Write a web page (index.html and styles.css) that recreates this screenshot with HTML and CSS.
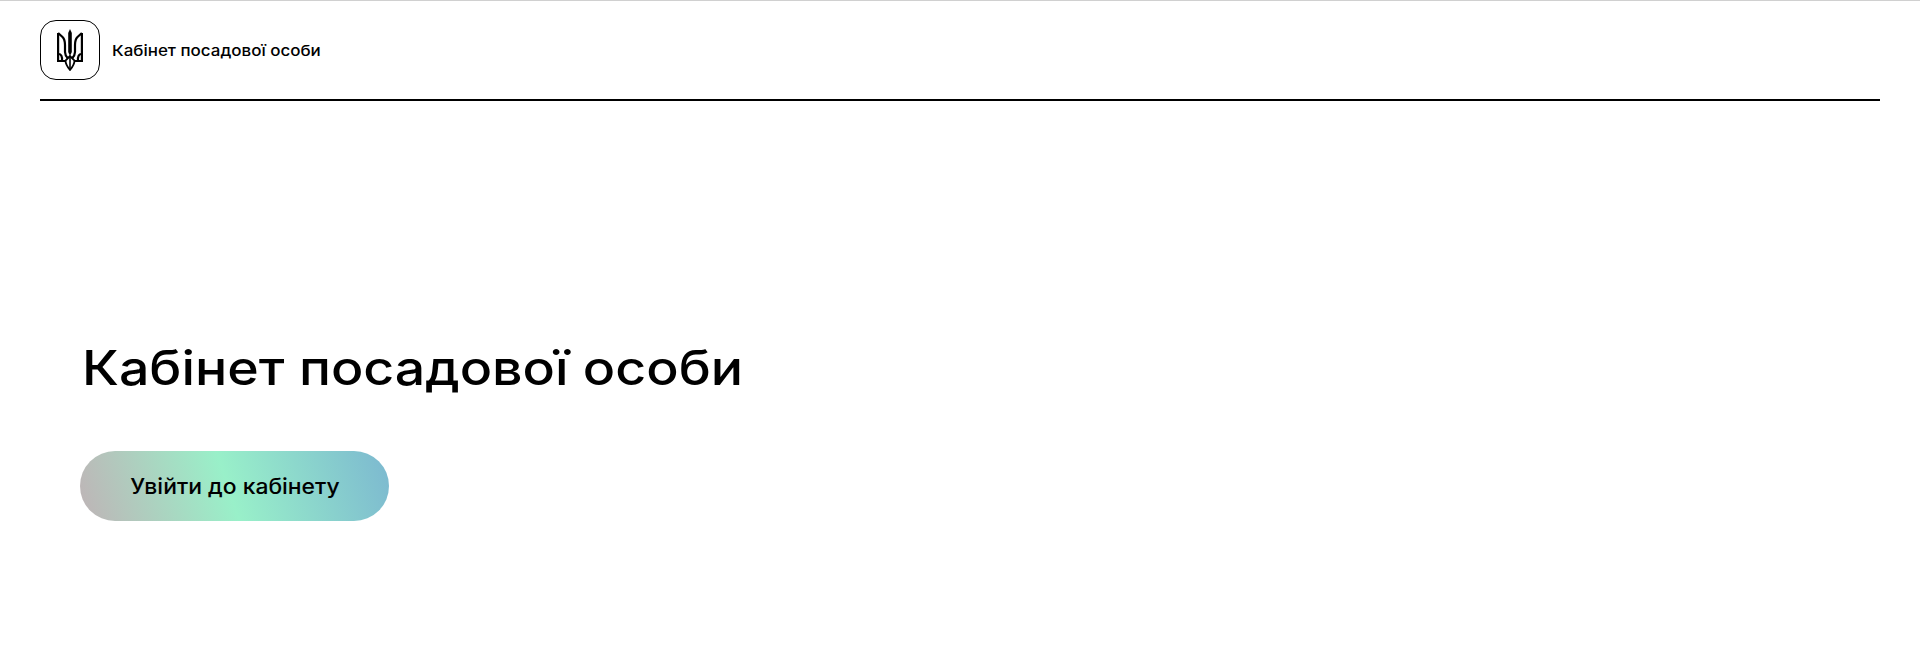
FILE: index.html
```html
<!DOCTYPE html>
<html lang="uk">
<head>
<meta charset="utf-8">
<title>Кабінет посадової особи</title>
<link rel="stylesheet" href="styles.css">
</head>
<body>
<header class="header">
  <div class="logo">
    <svg class="trident" viewBox="0 0 26 42" width="26" height="42" fill="none" stroke="#000" stroke-width="2.2" stroke-linejoin="miter">
      <path d="M13 0 L11.2 4 V23 L13 27 L14.8 23 V4 Z" fill="#000" stroke="none"/>
      <path d="M1.1 4 L5.5 8 C7.5 10 8 13 8 16 V23 C8 26 9.5 28 11 29.5"/>
      <path d="M24.9 4 L20.5 8 C18.5 10 18 13 18 16 V23 C18 26 16.5 28 15 29.5"/>
      <path d="M1.1 4 V32 H9"/>
      <path d="M24.9 4 V32 H17"/>
      <path d="M1.5 25 C4 25 5.5 27.5 5 32"/>
      <path d="M24.5 25 C22 25 20.5 27.5 21 32"/>
      <path d="M13 27 L8.5 31.5 C8.5 35.5 10.5 38 13 41 C15.5 38 17.5 35.5 17.5 31.5 Z" stroke-width="1.8"/>
      <path d="M13 28 V40" stroke-width="1.6"/>
    </svg>
  </div>
  <span class="brand">Кабінет посадової особи</span>
</header>
<main class="hero">
  <h1 class="title">Кабінет посадової особи</h1>
  <a class="cta" href="#"><span class="cta-label">Увійти до кабінету</span></a>
</main>
</body>
</html>
```

FILE: styles.css
```css
html, body {
  margin: 0;
  padding: 0;
  background: #fff;
  color: #000;
  font-family: Inter, "Noto Sans", sans-serif;
}
body {
  height: 657px;
  overflow: hidden;
  border-top: 1px solid #d0d0d0;
  box-sizing: border-box;
}
.header {
  display: flex;
  align-items: center;
  gap: 12px;
  margin: 0 40px;
  padding: 19px 0 19px;
  border-bottom: 2px solid #000;
}
.logo {
  width: 58px;
  height: 58px;
  border: 1px solid #000;
  border-radius: 16px;
  display: flex;
  align-items: center;
  justify-content: center;
}
.brand {
  display: inline-block;
  font-size: 15px;
  font-weight: 500;
  transform: scaleX(1.13);
  transform-origin: left center;
}
.hero {
  padding: 238px 80px 0;
}
.title {
  margin: 0 0 54px 2px;
  font-size: 48px;
  line-height: 58px;
  font-weight: 500;
  width: max-content;
  transform: scaleX(1.118);
  transform-origin: left center;
}
.cta {
  display: flex;
  align-items: center;
  justify-content: center;
  width: 309px;
  height: 70px;
  border-radius: 35px;
  background: linear-gradient(72deg, #bfb3b6 0%, #99f0c9 48%, #7cb8d0 100%);
  color: #000;
  text-decoration: none;
  font-size: 21px;
  font-weight: 500;
}
.cta-label {
  display: inline-block;
  transform: scaleX(1.09);
}
```
